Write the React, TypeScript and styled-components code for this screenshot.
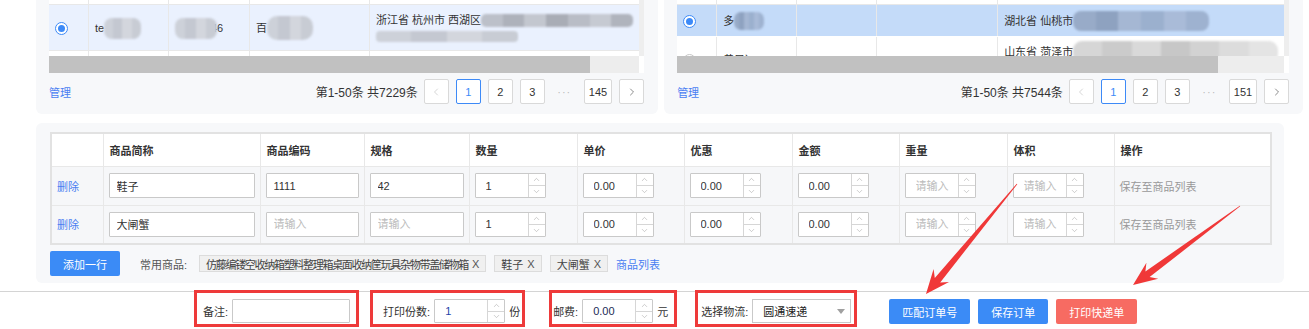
import React from 'react';
import styled, { createGlobalStyle } from 'styled-components';
import { ChevronLeft, ChevronRight, ChevronUp, ChevronDown } from 'lucide-react';

const GlobalStyle = createGlobalStyle`
  * { box-sizing: border-box; }
  html, body { margin: 0; padding: 0; background: #fff; }
  body {
    font-family: "Liberation Sans", "Noto Sans CJK SC", sans-serif;
    font-size: 11px;
    color: #333;
    overflow: hidden;
  }
  input, button { font-family: inherit; }
`;

const Page = styled.div`
  position: relative;
  width: 1309px;
  height: 329px;
  overflow: hidden;
`;

const Content = styled.div`
  display: flex;
  flex-direction: column;
  gap: 9px;
  padding: 0 25px 0 36px;
`;

const TopRow = styled.div`
  display: flex;
  gap: 6px;
`;

const Panel = styled.div`
  flex: 1;
  background: #f7f8fa;
  border-radius: 0 0 6px 6px;
  padding: 0 14px 10px 13px;
`;

/* ---------- top order tables ---------- */

const GridFrame = styled.div`
  display: flex;
  height: 56px;
  overflow: hidden;
  background: #fff;
`;

const GridBody = styled.div`
  flex: 1;
  min-width: 0;
`;

const VScroll = styled.div`
  width: 5px;
  background: #eeeeee;
`;

const GridRow = styled.div<{ $cols: string; $bg?: string; $line?: string }>`
  display: grid;
  grid-template-columns: ${p => p.$cols};
  background: ${p => p.$bg || '#fff'};
  border-bottom: 1px solid ${p => p.$line || '#e8e8e8'};
`;

const StubRow = styled(GridRow)`
  height: 5px;
`;

const Cell = styled.div`
  display: flex;
  align-items: center;
  padding: 7px 6px 6px;
  line-height: 16px;
  border-right: 1px solid #e8e8e8;
  white-space: nowrap;
  overflow: hidden;
  &:last-child { border-right: 0; }
`;

const AddressCell = styled(Cell)`
  flex-direction: column;
  align-items: flex-start;
  justify-content: center;
  overflow: visible;
`;

const Line = styled.div`
  display: flex;
  align-items: center;
  height: 16px;
`;

const Radio = styled.span<{ $checked?: boolean }>`
  width: 13px;
  height: 13px;
  border-radius: 50%;
  border: 1px solid ${p => (p.$checked ? '#3d8af7' : '#c6c6c6')};
  background: #fff;
  display: inline-flex;
  align-items: center;
  justify-content: center;
  flex-shrink: 0;
  &::after {
    content: '';
    width: 7px;
    height: 7px;
    border-radius: 50%;
    background: ${p => (p.$checked ? '#3d8af7' : 'transparent')};
  }
`;

const Smudge = styled.span<{ $w: number; $h: number; $tone: string[]; $over?: number }>`
  position: relative;
  z-index: 1;
  display: inline-block;
  flex-shrink: 0;
  width: ${p => p.$w}px;
  height: ${p => p.$h}px;
  margin-right: ${p => -(p.$over || 0)}px;
  border-radius: ${p => Math.round(p.$h / 2.5)}px;
  background: linear-gradient(
    90deg,
    ${p => p.$tone.map((c, i) => `${c} ${(i * 100) / p.$tone.length}% ${((i + 1) * 100) / p.$tone.length}%`).join(', ')}
  );
  filter: blur(1px);
`;

const HScroll = styled.div`
  display: flex;
  height: 17px;
`;

const HTrack = styled.div`
  flex: 1;
  display: flex;
  background: #ededed;
`;

const HThumb = styled.div<{ $w: number }>`
  width: ${p => p.$w}px;
  background: #c1c1c1;
`;

const HCorner = styled.div`
  width: 5px;
  background: #fff;
`;

const PanelFooter = styled.div`
  display: flex;
  align-items: center;
  height: 25px;
  margin-top: 6px;
`;

const Link = styled.a<{ $size?: number }>`
  color: #4a7ff2;
  font-size: ${p => p.$size || 11}px;
  cursor: pointer;
  white-space: nowrap;
`;

const Pager = styled.div`
  margin-left: auto;
  display: flex;
  align-items: center;
  gap: 7px;
`;

const Total = styled.span`
  font-size: 12px;
  color: #333;
  margin-right: -1px;
`;

const PageBtn = styled.button<{ $active?: boolean }>`
  min-width: 25px;
  height: 25px;
  padding: 0 4px;
  display: flex;
  align-items: center;
  justify-content: center;
  border: 1px solid ${p => (p.$active ? '#3d8af7' : '#d9d9d9')};
  border-radius: 2px;
  background: #fff;
  color: ${p => (p.$active ? '#3d8af7' : '#333')};
  font-size: 11px;
`;

const Ellipsis = styled.span`
  width: 25px;
  text-align: center;
  color: #bbb;
  letter-spacing: 1px;
`;

/* ---------- goods panel ---------- */

const GoodsPanel = styled.div`
  background: #f7f8fa;
  border-radius: 6px;
  padding: 9px 14px 7px;
`;

const GoodsTable = styled.table`
  width: 1220px;
  table-layout: fixed;
  border-collapse: collapse;
  border: 2px solid #e2e2e2;
`;

const Col = styled.col<{ $w: number }>`
  width: ${p => p.$w}px;
`;

const Th = styled.th`
  height: 33px;
  padding: 0 6px;
  text-align: left;
  font-weight: bold;
  color: #333;
  background: #fff;
  border: 1px solid #e8e8e8;
`;

const Td = styled.td`
  height: 39px;
  padding: 0 5px;
  background: #f6f7f9;
  border: 1px solid #e8e8e8;
  white-space: nowrap;
`;

const TextInput = styled.input`
  width: 100%;
  height: 25px;
  padding: 0 7px;
  border: 1px solid #c9c9c9;
  border-radius: 1px;
  background: #fff;
  font-size: 11px;
  color: #333;
  outline: none;
  &::placeholder { color: #bbb; }
`;

const SpinBox = styled.div<{ $w: number; $h: number }>`
  display: flex;
  width: ${p => p.$w}px;
  height: ${p => p.$h}px;
  border: 1px solid #c9c9c9;
  border-radius: 1px;
  background: #fff;
`;

const SpinInput = styled.input<{ $color?: string }>`
  flex: 1;
  min-width: 0;
  border: 0;
  padding: 0 0 0 10px;
  background: transparent;
  font-size: 11px;
  color: ${p => p.$color || '#333'};
  outline: none;
  &::placeholder { color: #bbb; }
`;

const SpinBtns = styled.div`
  width: 17px;
  display: flex;
  flex-direction: column;
  border-left: 1px solid #d6d6d6;
`;

const SpinBtn = styled.div`
  flex: 1;
  display: flex;
  align-items: center;
  justify-content: center;
  color: #a8a8a8;
  & + & { border-top: 1px solid #d6d6d6; }
`;

const Muted = styled.span`
  color: #999;
`;

const ToolRow = styled.div`
  display: flex;
  align-items: center;
  margin-top: 6px;
`;

const Button = styled.button<{ $tone?: 'blue' | 'red' }>`
  height: 25px;
  padding: 0 13px;
  border: 0;
  border-radius: 2px;
  background: ${p => (p.$tone === 'red' ? '#f76b62' : '#3b8bf6')};
  color: #fff;
  font-size: 11px;
  white-space: nowrap;
`;

const CommonLabel = styled.span`
  margin: 0 12px 0 20px;
  color: #555;
`;

const Tags = styled.div`
  display: flex;
  align-items: center;
  gap: 8px;
`;

const Tag = styled.span<{ $tight?: boolean }>`
  display: inline-flex;
  align-items: center;
  height: 17px;
  padding: 0 6px;
  border: 1px solid #dcdcdc;
  background: #f0f0f0;
  color: #444;
  white-space: nowrap;
  letter-spacing: ${p => (p.$tight ? '-1.3px' : '0')};
`;

const TagClose = styled.span`
  margin-left: 4px;
  letter-spacing: 0;
  color: #555;
`;

/* ---------- action bar ---------- */

const ActionBar = styled.div`
  display: flex;
  align-items: flex-start;
  height: 38px;
  margin-top: 8px;
  border-top: 1px solid #d4d4d4;
  padding-left: 194px;
`;

const Marked = styled.div<{ $pl: number; $pr: number; $ml?: number }>`
  display: flex;
  align-items: center;
  gap: 4px;
  height: 37px;
  margin-top: -2px;
  margin-left: ${p => p.$ml || 0}px;
  padding: 5px ${p => p.$pr}px 0 ${p => p.$pl}px;
  border: 3px solid #ee3a3a;
  white-space: nowrap;
`;

const FieldLabel = styled.span`
  color: #333;
`;

const NoteInput = styled(TextInput)`
  width: 118px;
  height: 24px;
`;

const Select = styled.div`
  display: flex;
  align-items: center;
  justify-content: space-between;
  width: 99px;
  height: 24px;
  padding: 0 5px 0 10px;
  border: 1px solid #c9c9c9;
  background: #fff;
  color: #222;
`;

const Caret = styled.span`
  width: 0;
  height: 0;
  border-left: 4px solid transparent;
  border-right: 4px solid transparent;
  border-top: 5px solid #a0a0a0;
`;

const ButtonGroup = styled.div`
  display: flex;
  gap: 8px;
  margin: 7px 0 0 32px;
`;

const Overlay = styled.svg`
  position: absolute;
  left: 0;
  top: 0;
  pointer-events: none;
`;

/* ---------- helpers ---------- */

const Spinner: React.FC<{ value?: string; placeholder?: string; w?: number; h?: number; color?: string }> = ({
  value = '',
  placeholder,
  w = 71,
  h = 25,
  color,
}) => (
  <SpinBox $w={w} $h={h}>
    <SpinInput readOnly value={value} placeholder={placeholder} $color={color} />
    <SpinBtns>
      <SpinBtn><ChevronUp size={9} strokeWidth={1.5} /></SpinBtn>
      <SpinBtn><ChevronDown size={9} strokeWidth={1.5} /></SpinBtn>
    </SpinBtns>
  </SpinBox>
);

const Pagination: React.FC<{ total: number; last: number }> = ({ total, last }) => (
  <Pager>
    <Total>第1-50条 共{total}条</Total>
    <PageBtn><ChevronLeft size={12} strokeWidth={1.5} color="#c8c8c8" /></PageBtn>
    <PageBtn $active>1</PageBtn>
    <PageBtn>2</PageBtn>
    <PageBtn>3</PageBtn>
    <Ellipsis>···</Ellipsis>
    <PageBtn>{last}</PageBtn>
    <PageBtn><ChevronRight size={12} strokeWidth={1.5} color="#666" /></PageBtn>
  </Pager>
);

const arrowPoints = (tx: number, ty: number, px: number, py: number) => {
  const len = Math.hypot(px - tx, py - ty);
  const ux = (px - tx) / len;
  const uy = (py - ty) / len;
  const nx = -uy;
  const ny = ux;
  const head = 24;
  const bx = px - ux * head;
  const by = py - uy * head;
  const kx = px - ux * (head - 6);
  const ky = py - uy * (head - 6);
  const pts = [
    [tx + nx * 0.4, ty + ny * 0.4],
    [kx + nx * 3.5, ky + ny * 3.5],
    [bx + nx * 10, by + ny * 10],
    [px, py],
    [bx - nx * 10, by - ny * 10],
    [kx - nx * 3.5, ky - ny * 3.5],
    [tx - nx * 0.4, ty - ny * 0.4],
  ];
  return pts.map(p => `${p[0].toFixed(1)},${p[1].toFixed(1)}`).join(' ');
};

const leftCols = '40px 80px 81px 120px 1fr';
const rightCols = '40px 80px 80px 121px 1fr';

const grayTone = ['#cdd1d9', '#c4c8d1', '#d3d6dd', '#c8ccd4'];
const darkTone = ['#bcc0c9', '#aeb2bb', '#c3c7cf', '#a9adb6', '#b9bdc6', '#c6cad2', '#b0b4bd'];
const blueTone = ['#98abc8', '#8ea2c0', '#a5b7d3', '#9bb0ce', '#a9bbd8', '#9eb2d0'];
const lightTone = ['#d6d6d6', '#cbcbcb', '#d9d9d9', '#c7c7c7', '#d2d2d2', '#dcdcdc', '#e4e4e4'];

const columns = [
  { title: '', w: 52 },
  { title: '商品简称', w: 157 },
  { title: '商品编码', w: 104 },
  { title: '规格', w: 105 },
  { title: '数量', w: 108 },
  { title: '单价', w: 107 },
  { title: '优惠', w: 108 },
  { title: '金额', w: 107 },
  { title: '重量', w: 108 },
  { title: '体积', w: 107 },
  { title: '操作', w: 157 },
];

const goods = [
  { name: '鞋子', code: '1111', spec: '42', qty: '1' },
  { name: '大闸蟹', code: '', spec: '', qty: '1' },
];

const App: React.FC = () => (
  <Page>
    <GlobalStyle />
    <Content>
      <TopRow>
        <Panel>
          <GridFrame>
            <GridBody>
              <StubRow $cols={leftCols}>
                <Cell /><Cell /><Cell /><Cell /><Cell />
              </StubRow>
              <GridRow $cols={leftCols} $bg="#eaf1fe">
                <Cell><Radio $checked /></Cell>
                <Cell>te<Smudge $w={37} $h={21} $tone={grayTone} /></Cell>
                <Cell><Smudge $w={42} $h={21} $tone={grayTone} $over={6} />46</Cell>
                <Cell>百<Smudge $w={46} $h={24} $tone={grayTone} /></Cell>
                <AddressCell>
                  <Line>浙江省 杭州市 西湖区 <Smudge $w={152} $h={13} $tone={darkTone} /></Line>
                  <Line><Smudge $w={142} $h={11} $tone={grayTone} /></Line>
                </AddressCell>
              </GridRow>
              <GridRow $cols={leftCols}>
                <Cell><Radio /></Cell><Cell /><Cell /><Cell />
                <AddressCell><Line /><Line /></AddressCell>
              </GridRow>
            </GridBody>
            <VScroll />
          </GridFrame>
          <HScroll>
            <HTrack><HThumb $w={541} /></HTrack>
            <HCorner />
          </HScroll>
          <PanelFooter>
            <Link>管理</Link>
            <Pagination total={7229} last={145} />
          </PanelFooter>
        </Panel>

        <Panel>
          <GridFrame>
            <GridBody>
              <StubRow $cols={rightCols}>
                <Cell /><Cell /><Cell /><Cell /><Cell />
              </StubRow>
              <GridRow $cols={rightCols} $bg="#c4dbf9" $line="#ffffff">
                <Cell><Radio $checked /></Cell>
                <Cell>多<Smudge $w={30} $h={18} $tone={blueTone} /></Cell>
                <Cell />
                <Cell />
                <AddressCell>
                  <Line>湖北省 仙桃市 <Smudge $w={136} $h={20} $tone={blueTone} /></Line>
                </AddressCell>
              </GridRow>
              <GridRow $cols={rightCols}>
                <Cell><Radio /></Cell>
                <Cell>黄目）</Cell>
                <Cell />
                <Cell />
                <AddressCell>
                  <Line>山东省 菏泽市 <Smudge $w={205} $h={22} $tone={lightTone} /></Line>
                  <Line />
                </AddressCell>
              </GridRow>
            </GridBody>
            <VScroll />
          </GridFrame>
          <HScroll>
            <HTrack><HThumb $w={541} /></HTrack>
            <HCorner />
          </HScroll>
          <PanelFooter>
            <Link>管理</Link>
            <Pagination total={7544} last={151} />
          </PanelFooter>
        </Panel>
      </TopRow>

      <GoodsPanel>
        <GoodsTable>
          <colgroup>
            {columns.map((c, i) => <Col key={i} $w={c.w} />)}
          </colgroup>
          <thead>
            <tr>{columns.map((c, i) => <Th key={i}>{c.title}</Th>)}</tr>
          </thead>
          <tbody>
            {goods.map((g, i) => (
              <tr key={i}>
                <Td><Link>删除</Link></Td>
                <Td><TextInput readOnly value={g.name} /></Td>
                <Td><TextInput readOnly value={g.code} placeholder="请输入" /></Td>
                <Td><TextInput readOnly value={g.spec} placeholder="请输入" /></Td>
                <Td><Spinner value={g.qty} /></Td>
                <Td><Spinner value="0.00" /></Td>
                <Td><Spinner value="0.00" /></Td>
                <Td><Spinner value="0.00" /></Td>
                <Td><Spinner placeholder="请输入" /></Td>
                <Td><Spinner placeholder="请输入" /></Td>
                <Td><Muted>保存至商品列表</Muted></Td>
              </tr>
            ))}
          </tbody>
        </GoodsTable>
        <ToolRow>
          <Button>添加一行</Button>
          <CommonLabel>常用商品:</CommonLabel>
          <Tags>
            <Tag $tight>仿藤编镂空收纳箱塑料整理箱桌面收纳筐玩具杂物带盖储物箱<TagClose>X</TagClose></Tag>
            <Tag>鞋子<TagClose>X</TagClose></Tag>
            <Tag>大闸蟹<TagClose>X</TagClose></Tag>
            <Link>商品列表</Link>
          </Tags>
        </ToolRow>
      </GoodsPanel>
    </Content>

    <ActionBar>
      <Marked $pl={6} $pr={6}>
        <FieldLabel>备注:</FieldLabel>
        <NoteInput readOnly value="" />
      </Marked>
      <Marked $pl={10} $pr={2} $ml={11}>
        <FieldLabel>打印份数:</FieldLabel>
        <Spinner value="1" w={71} h={24} color="#1f43a8" />
        <FieldLabel>份</FieldLabel>
      </Marked>
      <Marked $pl={1} $pr={6} $ml={24}>
        <FieldLabel>邮费:</FieldLabel>
        <Spinner value="0.00" w={71} h={24} color="#1c2a55" />
        <FieldLabel>元</FieldLabel>
      </Marked>
      <Marked $pl={3} $pr={3} $ml={18}>
        <FieldLabel>选择物流:</FieldLabel>
        <Select>圆通速递<Caret /></Select>
      </Marked>
      <ButtonGroup>
        <Button>匹配订单号</Button>
        <Button>保存订单</Button>
        <Button $tone="red">打印快递单</Button>
      </ButtonGroup>
    </ActionBar>

    <Overlay width={1309} height={329}>
      <polygon points={arrowPoints(1017, 184, 926, 294)} fill="#f03838" />
      <polygon points={arrowPoints(1240, 206, 1133, 285)} fill="#f03838" />
    </Overlay>
  </Page>
);

export default App;
